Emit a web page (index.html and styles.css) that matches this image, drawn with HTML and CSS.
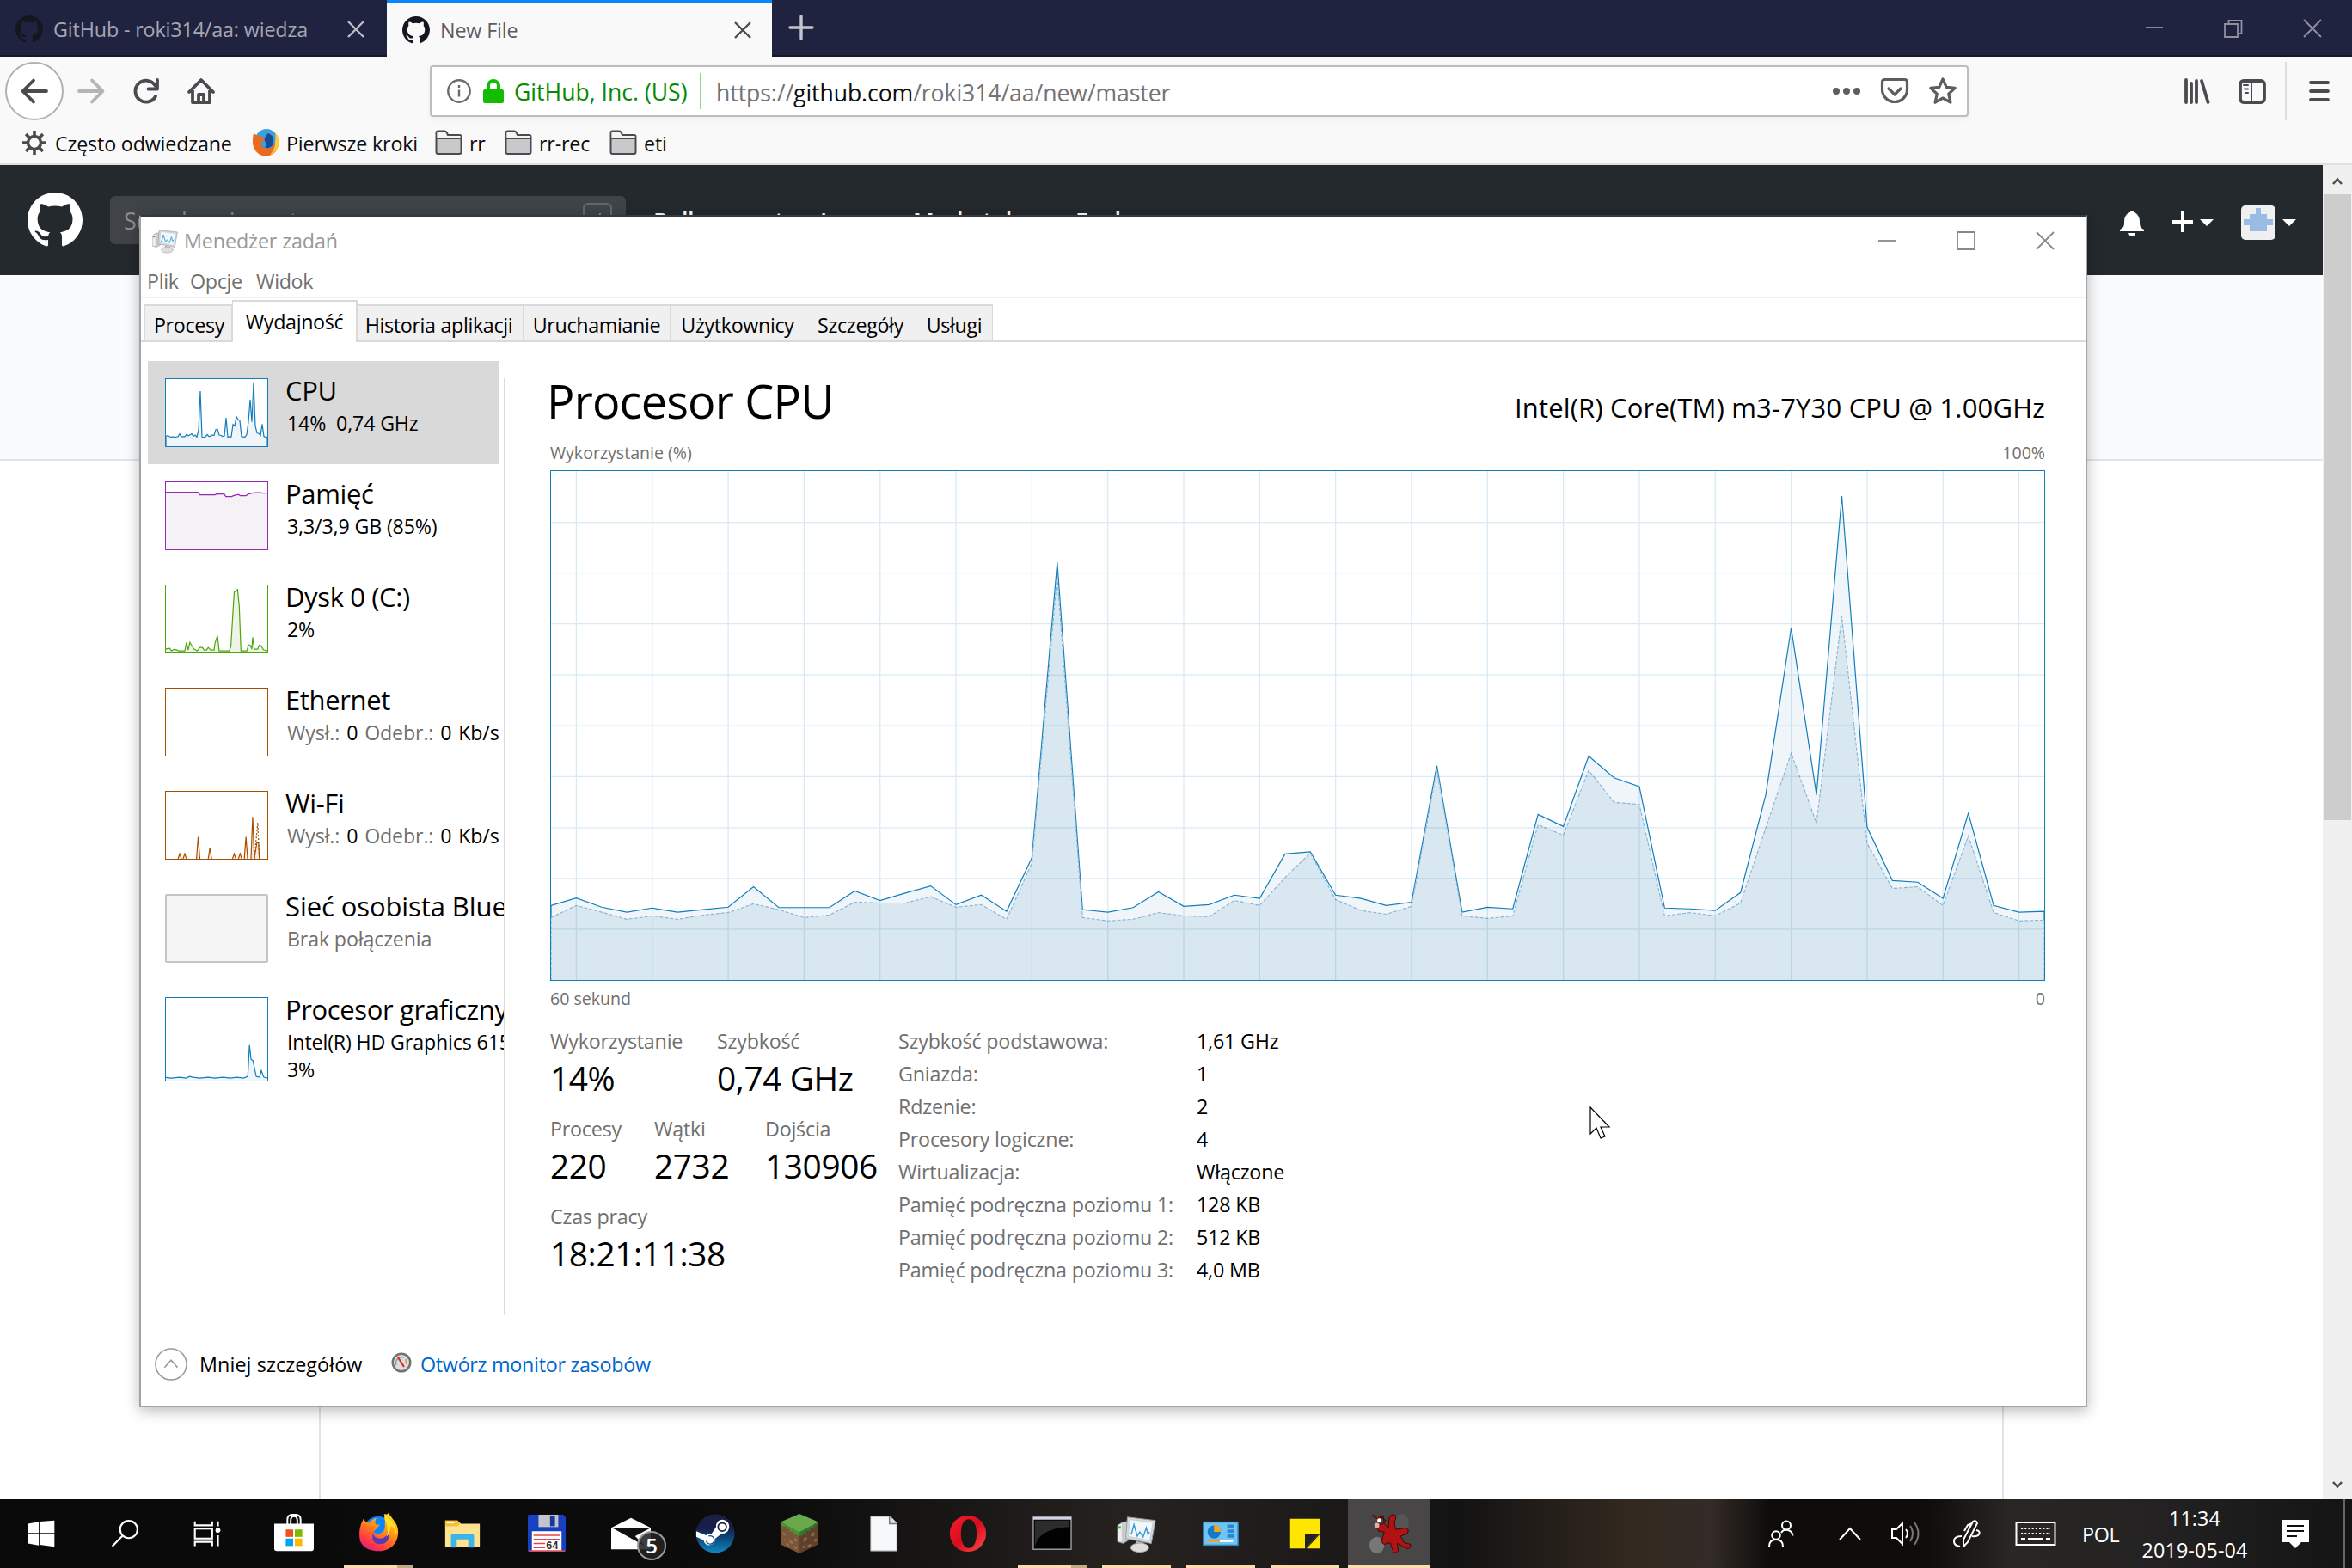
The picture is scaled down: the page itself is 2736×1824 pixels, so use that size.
FILE: index.html
```html
<!DOCTYPE html>
<html lang="pl">
<head>
<meta charset="utf-8">
<title>New File</title>
<link rel="stylesheet" href="styles.css">
</head>
<body>
<svg class="defs" aria-hidden="true">
  <symbol id="octocat" viewBox="0 0 16 16"><path fill="currentColor" d="M8 0C3.58 0 0 3.58 0 8c0 3.54 2.29 6.53 5.47 7.59.4.07.55-.17.55-.38 0-.19-.01-.82-.01-1.49-2.01.37-2.53-.49-2.69-.94-.09-.23-.48-.94-.82-1.13-.28-.15-.68-.52-.01-.53.63-.01 1.08.58 1.23.82.72 1.21 1.87.87 2.33.66.07-.52.28-.87.51-1.07-1.78-.2-3.64-.89-3.64-3.95 0-.87.31-1.59.82-2.15-.08-.2-.36-1.02.08-2.12 0 0 .67-.21 2.2.82.64-.18 1.32-.27 2-.27.68 0 1.36.09 2 .27 1.53-1.04 2.2-.82 2.2-.82.44 1.1.16 1.92.08 2.12.51.56.82 1.27.82 2.15 0 3.07-1.87 3.75-3.65 3.95.29.25.54.73.54 1.48 0 1.07-.01 1.93-.01 2.2 0 .21.15.46.55.38A8.013 8.013 0 0 0 16 8c0-4.42-3.58-8-8-8z"/></symbol>
  <symbol id="folder" viewBox="0 0 32 32"><path d="M1.500 27V4.500q0-2 2-2h8q1.500 0 2.500 2l1 2.500h13.500q2 0 2 2V27q0 2-2 2h-25q-2 0-2-2z" fill="#c9c9cb" stroke="#4a4a4f" stroke-width="2"/><path d="M2.500 8V4.500q0-1 1-1h8l2.500 4.500h15.500v2h-27z" fill="#f4f4f4"/><path d="M1.500 11h29" stroke="#4a4a4f" stroke-width="2"/></symbol>
  <symbol id="monitor" viewBox="0 0 48 48"><path d="M1 14l6-4 9-1v22l-8 5-7-2z" fill="#c9cbcc" stroke="#888" stroke-width=".8"/><path d="M1 14l5-2v22l-5-1z" fill="#eee"/><rect x="2" y="15" width="3" height="3" fill="#3fae2a"/><path d="M13 4l34 4-5 28-31-6z" fill="#d5d8da" stroke="#9a9c9d" stroke-width="1"/><path d="M16 7l28 3.500-4 22-26-5z" fill="#f1f8fd" stroke="#b8c4cc" stroke-width=".7"/><path d="M16 25l2-1 3-11 4 14 3-5 4 6 4-11 2 8 2-3" fill="none" stroke="#3b9bd4" stroke-width="1.500"/><path d="M24 33l9 2-1 5h-8z" fill="#b5b5b5"/><ellipse cx="28" cy="41" rx="11" ry="5.500" fill="#dedede" stroke="#a5a5a5"/></symbol>
</svg>

<header class="tabbar">
  <div class="tab">
    <svg class="tab-icon"><use href="#octocat"/></svg><span class="tab-title">GitHub - roki314/aa: wiedza</span>
    <svg class="tab-close" viewBox="0 0 20 20"><path d="M1 1l18 18M19 1L1 19"/></svg>
  </div>
  <div class="tab tab-active">
    <svg class="tab-icon"><use href="#octocat"/></svg><span class="tab-title">New File</span>
    <svg class="tab-close" viewBox="0 0 20 20"><path d="M1 1l18 18M19 1L1 19"/></svg>
  </div>
  <svg class="tab-new" viewBox="0 0 28 28"><path d="M14 1v26M1 14h26"/></svg>
  <div class="winctl winctl-dark">
    <svg viewBox="0 0 24 24"><path d="M2 11h20"/></svg>
    <svg viewBox="0 0 24 24"><path d="M2 7h15v15H2zM6.500 7V3h15v15H17"/></svg>
    <svg viewBox="0 0 24 24"><path d="M2 2l20 20M22 2L2 22"/></svg>
  </div>
</header>

<nav class="navbar">
  <div class="nav-buttons">
    <span class="back"><svg viewBox="0 0 32 32"><path d="M30 16H3M15 3.500L2.500 16 15 28.500"/></svg></span>
    <svg class="nav-ico dim" viewBox="0 0 32 32"><path d="M2 16h27M17 3.500L29.500 16 17 28.500"/></svg>
    <svg class="nav-ico" viewBox="0 0 32 32"><path d="M26.500 9.500A12.500 12.500 0 1 0 27 22M29 3v10.500H18.500"/></svg>
    <svg class="nav-ico" viewBox="0 0 32 32"><path d="M2 17L16 3l14 14M6 15v14h20V15M13 29v-9h6v9"/></svg>
  </div>
  <div class="urlbar">
    <svg class="u-info" viewBox="0 0 28 28"><circle cx="14" cy="14" r="12.700"/><path d="M14 12.500v8M14 7v3"/></svg>
    <svg class="u-lock" viewBox="0 0 24 28"><path d="M6 13V8a6 6 0 0 1 12 0v5" fill="none" stroke="#12bc00" stroke-width="4"/><rect y="12" width="24" height="16" rx="2" fill="#12bc00"/></svg>
    <span class="u-owner">GitHub, Inc. (US)</span>
    <span class="u-url">https://<b>github.com</b>/roki314/aa/new/master</span>
    <div class="u-actions">
      <svg viewBox="0 0 32 32"><g fill="#5e5e60" stroke="none"><circle cx="4" cy="16" r="4"/><circle cx="16" cy="16" r="4"/><circle cx="28" cy="16" r="4"/></g></svg>
      <svg viewBox="0 0 32 32"><path d="M1.500 5.500q0-3 3-3h23q3 0 3 3V14a14.500 14.500 0 0 1-29 0zM9 13l7 7 7-7"/></svg>
      <svg viewBox="0 0 32 32"><path d="M16 2l4.200 9.300 10 1.100-7.500 6.800 2.200 10L16 24l-8.900 5.200 2.200-10-7.500-6.800 10-1.100z"/></svg>
    </div>
  </div>
  <div class="nav-right">
    <svg viewBox="0 0 32 32"><path d="M3 3v26M9 7v22M15 4v25M21 4l7.500 25"/></svg>
    <svg viewBox="0 0 32 32"><rect x="2" y="4" width="28" height="25" rx="4"/><path d="M15 4v25" stroke-width="2"/><path d="M6 9h5M7 13.500h4M8 18h3" stroke-width="2"/></svg>
    <span class="nav-sep"></span>
    <svg class="burger" viewBox="0 0 32 32"><path d="M6 6h20M6 16h20M6 26h20"/></svg>
  </div>
</nav>

<div class="bookmarks">
  <svg viewBox="0 0 28 28" class="gear"><circle cx="14" cy="14" r="7.500" fill="none" stroke="#4a4a4f" stroke-width="3.500"/><path d="M14 0v6M14 22v6M0 14h6M22 14h6M4.100 4.100l4.200 4.200M19.700 19.700l4.200 4.200M23.900 4.100l-4.200 4.200M8.300 19.700l-4.200 4.200" stroke="#4a4a4f" stroke-width="3.600"/></svg><span class="bm bm1">Często odwiedzane</span>
  <svg viewBox="0 0 32 32"><circle cx="17" cy="13" r="13" fill="#3ba0e0"/><path d="M19 5q9 4 5 14-4 5-9 2 4-2 1-5-4-5 3-11z" fill="#1a4a94"/><path d="M2 5q-3 13 2 20 5 7 13 6.500 12-1 14-14 1-7-3-11 1 9-4 14-6 5-12 0-2-2-1-5 3-1 4-4-2-2-5-3-5-1-8-3.500z" fill="#ec6a1a"/><path d="M27 4q6 5 4 15-3 9-10 11 6-7 6-13 1-7 0-13z" fill="#ffc93a"/></svg><span class="bm bm2">Pierwsze kroki</span>
  <svg><use href="#folder"/></svg><span class="bm bm3">rr</span>
  <svg><use href="#folder"/></svg><span class="bm bm4">rr-rec</span>
  <svg><use href="#folder"/></svg><span class="bm">eti</span>
</div>

<main class="page">
  <div class="page-body">
    <div class="gh-header">
      <svg class="gh-mark"><use href="#octocat"/></svg>
      <div class="gh-search"><span>Search or jump to…</span><span class="gh-key">/</span></div>
      <span class="gh-link l1">Pull requests</span><span class="gh-link l2">Issues</span><span class="gh-link l3">Marketplace</span><span class="gh-link">Explore</span>
      <div class="gh-user">
        <svg class="bell" viewBox="0 0 28 32"><path fill="#fff" d="M14 1c1.500 0 2 1 2 2 5 1.500 7 6 7 11 0 6 1 7 5 9v2H0v-2c4-2 5-3 5-9 0-5 2-9.500 7-11 0-1 .5-2 2-2zM10 27h8q-1 4-4 4t-4-4z"/></svg>
        <svg class="plus" viewBox="0 0 24 24"><path d="M12 0v24M0 12h24" stroke="#fff" stroke-width="4"/></svg>
        <i class="caret c1"></i>
        <svg class="avatar" viewBox="0 0 40 40"><rect width="40" height="40" rx="5" fill="#f0f0f0"/><path fill="#9abbe3" d="M17 3h6v7h7v6h7v7h-7v7H10v-7H3v-7h7v-6h7z"/></svg>
        <i class="caret"></i>
      </div>
    </div>
    <div class="gh-sub"></div>
    <div class="gh-editor"></div>
  </div>
  <div class="scrollbar">
    <svg viewBox="0 0 12 10"><path d="M1 8l5-5.500L11 8"/></svg>
    <span class="thumb"></span>
    <svg class="down" viewBox="0 0 12 10"><path d="M1 2l5 5.500L11 2"/></svg>
  </div>
</main>

<section class="tm">
  <div class="tm-title">
    <svg class="tm-icon"><use href="#monitor"/></svg><span>Menedżer zadań</span>
    <div class="winctl">
      <svg viewBox="0 0 24 24"><path d="M2 12h20"/></svg>
      <svg viewBox="0 0 24 24"><path d="M2 2h20v20H2z"/></svg>
      <svg viewBox="0 0 24 24"><path d="M2 2l20 20M22 2L2 22"/></svg>
    </div>
  </div>
  <div class="tm-menu"><span>Plik</span><span>Opcje</span><span>Widok</span></div>
  <div class="tm-tabs"><span>Procesy</span><span class="on">Wydajność</span><span>Historia aplikacji</span><span>Uruchamianie</span><span>Użytkownicy</span><span>Szczegóły</span><span>Usługi</span></div>
  <div class="tm-main">
    <aside class="side">
      <div class="res sel">
        <svg class="graph blue" viewBox="0 263 59 1223" preserveAspectRatio="none"><path d="M0 1307L1 1289 2 1311 3 1323 4 1313 5 1323 6 1317 7 1311 8 1262 9 1312 10 1312 11 1312 12 1272 13 1295 14 1277 15 1260 16 1305 17 1282 18 1321 19 1192 20 482 21 1317 22 1323 23 1312 24 1274 25 1309 26 1305 27 1282 28 1290 29 1183 30 1178 31 1282 32 1290 33 1307 34 1299 35 971 36 1323 37 1311 38 1315 39 1088 40 1117 41 948 42 1000 43 1021 44 1313 45 1315 46 1319 47 1276 48 1040 49 640 50 1041 51 323 52 1119 53 1247 54 1251 55 1290 56 1085 57 1307 58 1323 59 1321V1500H0z"/></svg>
        <div><h3>CPU</h3><p>14%&nbsp; 0,74 GHz</p></div>
      </div>
      <div class="res">
        <svg class="graph purple" viewBox="0 0 120 80"><path d="M-2 12H38L40 15H58L60 14H69L71 17H78L80 16 86 14.500 88 16H95L98 14 105 12.500H113L115 13H122V82H-2z"/></svg>
        <div><h3>Pamięć</h3><p>3,3/3,9 GB (85%)</p></div>
      </div>
      <div class="res">
        <svg class="graph green" viewBox="0 0 120 80"><path d="M-2 76L4 75 6 78 10 76 15 78H22L24 68 26 77 28 68 33 76 37 78 40 74H43L45 77H48L50 74 53 77H57L58 69 61 60 63 78H75L77 73 79 40 81 8 85 5 87 25 89 78H96L98 71H100L102 76 103 62 105 76H109L111 71 113 72 116 77 122 78V82H-2z"/></svg>
        <div><h3>Dysk 0 (C:)</h3><p>2%</p></div>
      </div>
      <div class="res">
        <svg class="graph brown" viewBox="0 0 120 80"></svg>
        <div><h3>Ethernet</h3><p class="net"><i>Wysł.:</i> 0 <i>Odebr.:</i> 0 Kb/s</p></div>
      </div>
      <div class="res">
        <svg class="graph brown" viewBox="0 0 120 80"><path d="M14 80l2-6 2 6M20 80l2-6 2 6M36 80l2-26 2 26M50 80l2-13 2 13M79 80l2-6 2 6M86 80l2-6 2 6M93 80l2-26 2 26M101 80l2-50 2 50 3-19h2l1 19"/><path class="dots" d="M105 80l4-43 2 43"/></svg>
        <div><h3>Wi-Fi</h3><p class="net"><i>Wysł.:</i> 0 <i>Odebr.:</i> 0 Kb/s</p></div>
      </div>
      <div class="res">
        <svg class="graph grey" viewBox="0 0 120 80"></svg>
        <div><h3 class="wide">Sieć osobista Bluetooth</h3><p><i>Brak połączenia</i></p></div>
      </div>
      <div class="res gpu">
        <svg class="graph blue tall" viewBox="0 0 120 98"><path d="M-2 94L6 95 16 94 24 95 28 93 32 94 40 95 50 94 58 95 68 94 76 95 84 94 92 95 97 93 99 56 101 73 103 74 107 93 111 94 113 86 116 94 122 95V100H-2z"/></svg>
        <div><h3>Procesor graficzny 0</h3><p class="wide">Intel(R) HD Graphics 615</p><p>3%</p></div>
      </div>
    </aside>
    <div class="detail">
      <div class="d-head"><h1>Procesor CPU</h1><span>Intel(R) Core(TM) m3-7Y30 CPU @ 1.00GHz</span></div>
      <div class="d-axis"><span>Wykorzystanie (%)</span><span>100%</span></div>
      <svg class="chart" viewBox="0 263 59 1223" preserveAspectRatio="none">
        <path class="total" d="M0 1307L1 1289 2 1311 3 1323 4 1313 5 1323 6 1317 7 1311 8 1262 9 1312 10 1312 11 1312 12 1272 13 1295 14 1277 15 1260 16 1305 17 1282 18 1321 19 1192 20 482 21 1317 22 1323 23 1312 24 1274 25 1309 26 1305 27 1282 28 1290 29 1183 30 1178 31 1282 32 1290 33 1307 34 1299 35 971 36 1323 37 1311 38 1315 39 1088 40 1117 41 948 42 1000 43 1021 44 1313 45 1315 46 1319 47 1276 48 1040 49 640 50 1041 51 323 52 1119 53 1247 54 1251 55 1290 56 1085 57 1307 58 1323 59 1321V1500H0z"/>
        <path class="kernel" d="M0 1336L1 1307 2 1323 3 1340 4 1332 5 1340 6 1330 7 1324 8 1303 9 1317 10 1336 11 1330 12 1299 13 1301 14 1301 15 1286 16 1311 17 1305 18 1340 19 1205 20 515 21 1336 22 1344 23 1340 24 1324 25 1332 26 1334 27 1295 28 1307 29 1240 30 1181 31 1293 32 1319 33 1328 34 1309 35 980 36 1332 37 1338 38 1332 39 1113 40 1138 41 982 42 1059 43 1064 44 1332 45 1324 46 1332 47 1301 48 1120 49 941 50 1109 51 612 52 1158 53 1266 54 1262 55 1307 56 1140 57 1324 58 1344 59 1342V1500H0z"/>
        <path class="grid" d="M1 263V1486M4 263V1486M7 263V1486M10 263V1486M13 263V1486M16 263V1486M19 263V1486M22 263V1486M25 263V1486M28 263V1486M31 263V1486M34 263V1486M37 263V1486M40 263V1486M43 263V1486M46 263V1486M49 263V1486M52 263V1486M55 263V1486M58 263V1486M0 386H59M0 508H59M0 630H59M0 753H59M0 875H59M0 997H59M0 1120H59M0 1242H59M0 1364H59"/>
      </svg>
      <div class="d-axis d-axis2"><span>60 sekund</span><span>0</span></div>
      <div class="stats">
        <div class="live">
          <div class="live-row r2"><div><label>Wykorzystanie</label><b>14%</b></div><div><label>Szybkość</label><b>0,74 GHz</b></div></div>
          <div class="live-row r3"><div><label>Procesy</label><b>220</b></div><div><label>Wątki</label><b>2732</b></div><div><label>Dojścia</label><b>130906</b></div></div>
          <div class="live-row"><div><label>Czas pracy</label><b>18:21:11:38</b></div></div>
        </div>
        <dl class="facts">
          <dt>Szybkość podstawowa:</dt><dd>1,61 GHz</dd>
          <dt>Gniazda:</dt><dd>1</dd>
          <dt>Rdzenie:</dt><dd>2</dd>
          <dt>Procesory logiczne:</dt><dd>4</dd>
          <dt>Wirtualizacja:</dt><dd>Włączone</dd>
          <dt>Pamięć podręczna poziomu 1:</dt><dd>128 KB</dd>
          <dt>Pamięć podręczna poziomu 2:</dt><dd>512 KB</dd>
          <dt>Pamięć podręczna poziomu 3:</dt><dd>4,0 MB</dd>
        </dl>
      </div>
    </div>
  </div>
  <div class="tm-foot">
    <svg class="less" viewBox="0 0 40 40"><circle cx="20" cy="20" r="19"/><path d="M12 24l8-9 8 9"/></svg>
    <span class="f1">Mniej szczegółów</span>
    <svg class="gauge" viewBox="0 0 24 24"><circle cx="12" cy="12" r="11.500" fill="#6f7373"/><circle cx="12" cy="12" r="9" fill="#dedede"/><path d="M6 15a7 7 0 0 1 9-9" fill="none" stroke="#999" stroke-width="1.500"/><path d="M8 6l7 11" stroke="#d22" stroke-width="2"/><path d="M17 8l1 6" stroke="#e59a4c" stroke-width="2"/></svg>
    <a>Otwórz monitor zasobów</a>
  </div>
</section>

<svg class="cursor" viewBox="0 0 24 38"><path d="M1 1v31l7-7 5 12 5-2-5-11h10z" fill="#fff" stroke="#000" stroke-width="1.200"/></svg>

<footer class="taskbar">
  <div class="tb-apps">
    <span class="app first"><svg viewBox="0 0 48 48"><path fill="#fff" d="M8 12l13-2.300V23.200H8zM22.300 9.500L40 8v15.200H22.300zM8 24.500h13v13.800L8 36zM22.300 24.500H40V40l-17.700-2.500z"/></svg></span>
    <span class="app"><svg viewBox="0 0 48 48"><g fill="none" stroke="#fff" stroke-width="2.200"><circle cx="29" cy="19" r="10.500"/><path d="M21.500 26.500L9 39.500"/></g></svg></span>
    <span class="app"><svg viewBox="0 0 48 48"><g fill="none" stroke="#fff" stroke-width="2.200"><path d="M7 9v5h21V9M7 39v-5h21v5"/><rect x="7" y="18" width="21" height="12"/><path d="M35 9v6M35 26v13"/></g><circle cx="35" cy="20" r="3" fill="#fff"/></svg></span>
    <span class="app"><svg viewBox="0 0 48 48"><path d="M16 13V7q0-6 6-6h4q6 0 6 6v6M20 13V8q0-5 4-5t4 5v5" fill="none" stroke="#fff" stroke-width="2"/><path d="M0 12h48v30q0 3-3 3H3q-3 0-3-3z" fill="#fff"/><path fill="#f25022" d="M14 19h9v9h-9z"/><path fill="#7fba00" d="M25 19h9v9h-9z"/><path fill="#00a4ef" d="M14 30h9v9h-9z"/><path fill="#ffb900" d="M25 30h9v9h-9z"/></svg></span>
    <span class="app run split"><svg viewBox="0 0 48 48"><defs><linearGradient id="fx" x1=".8" y1="0" x2=".2" y2="1"><stop offset="0" stop-color="#ffe226"/><stop offset=".45" stop-color="#ff8a16"/><stop offset=".8" stop-color="#ff3647"/><stop offset="1" stop-color="#d6208f"/></linearGradient></defs><circle cx="24" cy="21" r="18" fill="#0a84ff"/><path d="M6 6q2 4 7 5 4-5 9-6-3 4-1 8h5l-4 5-4 4q5 4 10 1 5-3 4-10 1-7-1-13 4 2 5-1 4 5 7 9 6 7 5 17-2 17-20 20Q8 46 2 33-1 18 6 6z" fill="url(#fx)"/><path d="M17 22q1 8 10 8 8-1 8-9 5 10-4 15-10 3-14-5z" fill="#5b36b5"/><path d="M33 0q2 6 7 9 7 8 6 16-2-8-7-11 0 9-5 14 3-12-1-19-3-4 0-9z" fill="#ffe226"/></svg></span>
    <span class="app"><svg viewBox="0 0 48 48"><path d="M3 8h15l4 4h23v28H3z" fill="#ffe28f"/><path d="M3 8h15l3 4-3 3H3z" fill="#f5c236"/><path d="M5 9.500h9v2H5z" fill="#fff"/><path d="M10 41V27q0-3 3-3h22q3 0 3 3v14h-7V31H17v10z" fill="#3cb6ea"/></svg></span>
    <span class="app"><svg viewBox="0 0 48 48"><path d="M1 3q0-2 2-2h41l3 3v40q0 2-2 2H3q-2 0-2-2z" fill="#1741c0"/><path d="M14 1h24v15H14z" fill="#c3c5cb"/><path d="M28 2h6v13h-6z" fill="#173a9c"/><path d="M6 21h36v24H6z" fill="#fff"/><path d="M2 45h44" stroke="#d24a5a" stroke-width="2"/><path d="M8 26h32M8 31h32M8 36h14M8 41h14" stroke="#e4444d" stroke-width="1.500"/><text x="23" y="43" class="f64">64</text></svg></span>
    <span class="app"><svg viewBox="0 0 48 48"><path d="M0 17L24 5l24 12v26H0z" fill="#fff"/><path d="M2 17.500h45L29 27l12 12z" fill="#111"/></svg><em class="badge">5</em></span>
    <span class="app"><svg viewBox="0 0 48 48"><defs><linearGradient id="st" x1="0" y1="0" x2="0" y2="1"><stop offset="0" stop-color="#1b2144"/><stop offset=".35" stop-color="#181c48"/><stop offset=".6" stop-color="#0b4577"/><stop offset="1" stop-color="#1387c0"/></linearGradient></defs><circle cx="24" cy="24" r="23.500" fill="url(#st)"/><path d="M1 21l12 5q3-2 6-1l6-9q0-9 8-9 8 1 8 9-1 8-9 8l-8 6q0 7-7 8-6 0-7-6L1 28z" fill="#fff"/><circle cx="32.500" cy="16" r="5" fill="#fff" stroke="#181c48" stroke-width="1.800"/><path d="M13 33a5 5 0 1 0 3-6" fill="none" stroke="#0b4577" stroke-width="1.300"/></svg></span>
    <span class="app"><svg viewBox="0 0 48 48"><path fill="#6aa84c" d="M24 0l23 10-23 13L1 10z"/><path fill="#7a5538" d="M1 11l23 12v25L1 37z"/><path fill="#5f4029" d="M47 11L24 23v25l23-11z"/><path fill="#4a9435" d="M1 10l23 12v5l-3-1v-2l-4 1v-4l-5 1v-4l-4 1v-3l-7-2z"/><path fill="#2f7a2b" d="M47 10L24 22v5l4-1v-3l4 2v-5l5 1v-4l5 1v-4l5-1z"/><path fill="#9a7353" d="M4 22l3 2v3l-3-2zM12 32l4 2v3l-4-2zM18 29l3 2v3l-3-1zM8 35l3 1v3l-3-1zM5 30l2 1v2l-2-1zM18 39l3 1v3l-3-1z"/><path fill="#8a6a50" d="M29 30l4-2v4l-4 2zM38 24l4-2v4l-4 2zM34 38l4-2v3l-4 2zM28 39l3-1v3l-3 1zM42 31l3-1v3l-3 1z"/></svg></span>
    <span class="app"><svg viewBox="0 0 48 48"><path d="M8 3h24l8 8v34H8z" fill="#f7f8fa" stroke="#888" stroke-width="1"/><path d="M31 3v9h9" fill="#e2e2e4" stroke="#777" stroke-width="1.500"/></svg></span>
    <span class="app"><svg viewBox="0 0 48 48"><defs><linearGradient id="op" x1="0" y1="0" x2="1" y2="1"><stop offset="0" stop-color="#ff1b2d"/><stop offset=".5" stop-color="#d50d1f"/><stop offset="1" stop-color="#ff4b4b"/></linearGradient></defs><path fill-rule="evenodd" fill="url(#op)" d="M24 2a22 22 0 1 1 0 44a22 22 0 0 1 0-44zM25 6.500c-6 0-9.500 7-9.500 17.500S19 41.500 25 41.500 34.500 34 34.500 24 31 6.500 25 6.500z"/></svg></span>
    <span class="app run split"><svg viewBox="0 0 48 48"><rect x="1" y="4" width="46" height="39" fill="#020202" stroke="#9c9ca8" stroke-width="1.500"/><path d="M1 4h46v3H1z" fill="#d4d4e2"/><path d="M3 41Q6 18 45 16V8H3z" fill="#2c2c2c"/></svg></span>
    <span class="app run"><svg><use href="#monitor"/></svg></span>
    <span class="app run"><svg viewBox="0 0 48 48"><rect x="3" y="10" width="42" height="28" fill="#6fc4f4" stroke="#2a86c4" stroke-width="1.500"/><circle cx="16" cy="22" r="8" fill="#1878c8"/><path d="M16 22V13a9 9 0 0 1 8 9z" fill="#f8a51b"/><path d="M32 13h8v4h-8zM32 19h8v4h-8zM32 25h8v4h-8z" fill="#2a86d0"/><path d="M8 33h31" stroke="#fff" stroke-width="2.500"/><path d="M8 33h15" stroke="#f29a18" stroke-width="2.500"/></svg></span>
    <span class="app run"><svg viewBox="0 0 48 48"><path d="M6 6h36v18L24 42H6z" fill="#ffe600"/><path d="M24 24h18L24 42z" fill="#222"/><path d="M42 25v17H26z" fill="#ffe600"/></svg></span>
    <span class="app run active"><svg viewBox="0 0 48 48"><ellipse cx="39" cy="11" rx="9" ry="11" fill="#555"/><ellipse cx="9" cy="38" rx="9" ry="10" fill="#777"/><path d="M3 2l7 4 7-3 1 9 5 5 1-12q2-5 6-4 4 3 0 9l2 9 12-2q5 2 2 7l-8 3 4 8 8 2q1 6-5 5l-7-4-4-2 1 9q-3 4-6 1l-4-11-7 2q-5-2-2-8l2-7-7-1-2-6 7-3 4-4-8-5z" fill="#b11212" stroke="#3a0505" stroke-width="1"/><circle cx="12" cy="8" r="2.500" fill="#fff"/><circle cx="9" cy="14" r="3" fill="#f0a9a0"/></svg></span>
  </div>
  <div class="tray">
    <svg class="t-people" viewBox="0 0 32 32"><circle cx="22" cy="6.500" r="5"/><path d="M16 15q2-3.500 6-3.500 7 1 7.500 7"/><circle cx="10" cy="18" r="4.800"/><path d="M2 31q0-8 8-8t8 8"/></svg>
    <svg class="t-up" viewBox="0 0 32 32"><path d="M4 23l12-13 12 13"/></svg>
    <svg class="t-vol" viewBox="0 0 32 32"><path d="M1 11h5l7-7v24l-7-7H1z"/><path d="M17 11q4 5 0 10"/><path d="M22 7q6 9 0 18M27 3q9 13 0 26" stroke="#777"/></svg>
    <svg class="t-pen" viewBox="0 0 32 32"><path d="M23 2q4-2 5 2L17 26l-5 5v-8zM22 4l-5 2-4 7M10 19q-9 0-9 6 0 5 7 6M27 12q5 1 3 5-2 3-8 2"/></svg>
    <svg class="t-kb" viewBox="0 0 48 32"><rect x="1.500" y="3" width="45" height="26"/><path d="M7 10h34M7 16h34" stroke-dasharray="2.200 2"/><path d="M7 22h5M15 22h18M36 22h5"/></svg>
    <span class="lang">POL</span>
    <div class="clock"><span>11:34</span><span>2019-05-04</span></div>
    <svg class="t-note" viewBox="0 0 32 32"><path d="M0 0h32v26h-9l-7 7-7-7H0z" fill="#fff" stroke="none"/><path d="M6 7h20M6 13h20M6 19h12" stroke="#111"/></svg>
    <span class="peek"></span>
  </div>
</footer>
</body>
</html>
```
FILE: styles.css
```css
* { box-sizing: border-box; margin: 0; padding: 0; letter-spacing: -0.015em; }
body {
  position: relative; width: 2736px; height: 1824px; overflow: hidden;
  display: flex; flex-direction: column;
  font-family: "Open Sans", "Noto Sans", sans-serif; font-size: 23.300px; color: #000; background: #fff;
}
svg { display: block; flex: none; fill: none; overflow: visible; }
span, p, h1, h3, label, dt, dd { white-space: nowrap; }
.defs { position: absolute; width: 0; height: 0; }

/* browser tabs */
.tabbar { height: 66px; flex: none; display: flex; background: #202340; box-shadow: inset 0 -2px #15172c; }
.tab { width: 450px; display: flex; align-items: center; padding: 2px 26px 0 18px; color: #a5a6b2; }
.tab-active { width: 448px; background: #f9f9fa; border-top: 4px solid #0a84ff; padding: 0 24px 0 18px; color: #5c5c61; }
.tab-icon { width: 32px; height: 32px; color: #15161f; }
.tab-title { flex: 1; margin-left: 12px; letter-spacing: -0.006em; }
.tab-close { width: 20px; height: 20px; stroke: #bcbdc8; stroke-width: 2.400; }
.tab-active .tab-close { stroke: #4a4a4f; }
.tab-new { width: 28px; height: 28px; margin: 18px 0 0 20px; stroke: #c3c4cf; stroke-width: 3.400; stroke-linecap: round; }
.winctl { display: flex; align-items: center; gap: 68px; margin-left: auto; margin-right: 34px; height: 100%; }
.winctl svg { width: 24px; height: 24px; stroke: #888; stroke-width: 1.800; }
.winctl-dark svg { stroke: #8f91a0; }

/* browser toolbar */
.navbar { height: 78px; flex: none; display: flex; background: #f9f9fa; padding-top: 6px; }
.nav-buttons { width: 500px; height: 68px; padding-left: 6px; display: flex; align-items: center; }
.back { width: 68px; height: 68px; border: 2px solid #b1b1b1; border-radius: 50%; background: #fff; display: grid; place-items: center; }
.back svg, .nav-ico { width: 32px; height: 32px; stroke: #4a4a4f; stroke-width: 3.800; stroke-linecap: round; stroke-linejoin: round; }
.nav-ico { margin-left: 32px; }
.back + .nav-ico { margin-left: 16px; }
.dim { stroke: #b5b5b7; }
.urlbar { width: 1790px; height: 60px; margin-top: 4px; border: 2px solid #bdbdbe; border-radius: 4px; background: #fff; box-shadow: 0 2px 6px rgba(0,0,0,.06); display: flex; align-items: center; font-size: 26.600px; }
.u-info { width: 28px; height: 28px; margin-left: 18px; stroke: #6b6b6e; stroke-width: 2.400; }
.u-lock { width: 24px; height: 28px; margin-left: 14px; }
.u-owner { width: 218px; margin-left: 12px; color: #058b00; height: 42px; line-height: 45px; border-right: 2px solid #8ad883; letter-spacing: 0; }
.u-url, .u-url b { letter-spacing: -0.003em; }
.u-url { margin-left: 17px; padding-top: 3px; color: #737376; }
.u-url b { font-weight: 400; color: #0c0c0d; }
.u-actions { display: flex; gap: 24px; margin-left: auto; margin-right: 12px; }
.u-actions svg { width: 32px; height: 32px; stroke: #5e5e60; stroke-width: 3.200; stroke-linejoin: round; stroke-linecap: round; }
.nav-right { height: 68px; flex: 1; display: flex; align-items: center; padding-left: 250px; }
.nav-right svg { width: 32px; height: 32px; stroke: #4a4a4f; stroke-width: 3.800; stroke-linecap: round; }
.nav-right svg + svg { margin-left: 32px; }
.nav-sep { width: 2px; height: 68px; background: #dcdcdd; margin-left: 22px; }
.nav-right .burger { margin-left: 22px; }
.bookmarks { height: 48px; flex: none; display: flex; align-items: center; padding: 0 0 2px 24px; background: #f9f9fa; border-bottom: 2px solid #e0e0e1; color: #0c0c0d; }
.bookmarks svg { width: 32px; height: 32px; }
.bookmarks .gear { width: 28px; height: 28px; margin: 0 2px; }
.bm { margin-left: 8px; padding-top: 2px; letter-spacing: -0.008em; }
.bm1 { width: 229px; } .bm2 { width: 173px; } .bm3 { width: 41px; } .bm4 { width: 82px; }

/* page */
.page { flex: 1; display: flex; }
.page-body { width: 2702px; display: flex; flex-direction: column; }
.gh-header { height: 128px; background: #24292e; display: flex; align-items: center; padding-left: 32px; font-size: 27px; }
.gh-mark { width: 64px; height: 64px; color: #fff; }
.gh-search { width: 600px; height: 56px; margin-left: 32px; border-radius: 6px; background: #404448; color: #8b8e90; padding: 0 16px; display: flex; align-items: center; justify-content: space-between; }
.gh-key { width: 34px; height: 40px; border: 2px solid #64686b; border-radius: 6px; text-align: center; line-height: 34px; font-size: 22px; }
.gh-link { color: #fff; font-weight: 600; }
.l1 { margin-left: 32px; width: 194px; } .l2 { width: 108px; } .l3 { width: 189px; }
.gh-user { margin-left: auto; margin-right: 31px; display: flex; align-items: center; }
.bell { width: 28px; height: 32px; margin-top: 8px; }
.plus { width: 24px; height: 24px; margin-left: 33px; margin-top: 4px; }
.caret { border: 8px solid transparent; border-top-color: #fff; border-bottom: 0; margin-left: 8px; margin-top: 6px; }
.avatar { width: 40px; height: 40px; margin-left: 32px; margin-top: 6px; }
.gh-sub { height: 216px; background: #fafbfc; border-bottom: 2px solid #e1e4e8; }
.gh-editor { flex: 1; width: 1960px; margin-left: 371px; border: solid #e1e2ea; border-width: 0 2px; }
.scrollbar { width: 34px; background: #f0f0f0; display: flex; flex-direction: column; align-items: center; }
.scrollbar svg { width: 12px; height: 10px; margin: 14px 0 10px; stroke: #505050; stroke-width: 2.600; }
.thumb { width: 32px; height: 728px; background: #cdcdcd; }
.scrollbar .down { margin-top: auto; margin-bottom: 12px; }

/* task manager window */
.tm { position: absolute; left: 162px; top: 250px; width: 2266px; height: 1387px; border: 2px solid #a3a4a5; border-top-color: #35393d; background: #fff; box-shadow: 0 4px 16px rgba(0,0,0,.28); display: flex; flex-direction: column; }
.tm-title { height: 55px; display: flex; align-items: center; padding-left: 13px; color: #999; }
.tm-title > span { letter-spacing: -0.005em; }
.tm-icon { width: 30px; height: 30px; margin-right: 7px; }
.tm-title .winctl { margin-right: 35px; }
.tm-menu { height: 40px; padding-left: 7px; display: flex; border-bottom: 2px solid #f0f0f0; color: #707070; line-height: 40px; }
.tm-menu span:nth-child(1) { width: 50px; } .tm-menu span:nth-child(2) { width: 77px; }
.tm-tabs { height: 51px; padding-left: 4px; display: flex; align-items: flex-end; box-shadow: inset 0 -2px #dadada; }
.tm-tabs span { height: 44px; line-height: 44px; background: #f0f0f0; border: solid #d9d9d9; border-width: 2px 1px 2px 0; text-align: center; }
.tm-tabs span:nth-child(1) { width: 102px; border-left-width: 1px; padding-left: 2px; }
.tm-tabs .on { width: 146px; height: 49px; line-height: 46px; background: #fff; border-width: 2px 2px 0 1px; }
.tm-tabs span:nth-child(3) { width: 193px; padding-right: 3px; } .tm-tabs span:nth-child(4) { width: 171px; }
.tm-tabs span:nth-child(5) { width: 157px; } .tm-tabs span:nth-child(6) { width: 129px; } .tm-tabs span:nth-child(7) { width: 89px; }
.tm-main { height: 1141px; display: flex; }
.side { width: 422px; padding: 22px 0 0 8px; overflow: hidden; }
.res { width: 408px; height: 120px; padding: 20px 0 0 20px; display: flex; }
.sel { background: #d9d9d9; }
.res > div { margin: -4px 0 0 20px; }
.res h3 { font-weight: 400; font-size: 31px; line-height: 36px; letter-spacing: -0.012em; }
.res h3.wide { letter-spacing: -0.003em; }
.res p { line-height: 32px; font-size: 23.200px; padding-left: 2px; letter-spacing: -0.006em; }
.res p i { letter-spacing: -0.006em; }
.res .net { word-spacing: 2px; }
.res h3 + p { margin-top: 4px; }
.res i { font-style: normal; color: #707070; }
.graph { width: 120px; height: 80px; border: 1px solid; background: #fff; overflow: hidden; }
.tall { height: 98px; }
.graph path { stroke: currentColor; stroke-width: 1.200; vector-effect: non-scaling-stroke; }
.blue { color: #117dbb; } .blue path { fill: #f0f5fa; }
.purple { color: #9528b4; } .purple path { fill: #f4f2f5; }
.green { color: #4da60c; } .green path { fill: #eef5e8; }
.brown { color: #a74f01; } .brown path { fill: #f8ece2; } .brown .dots { stroke-dasharray: 2 2; fill: none; }
.grey { color: #c4c4c4; border-width: 2px; background: #f5f5f5; border-radius: 2px; }
.detail { width: 1793px; margin-top: 42px; height: 1090px; border-left: 2px solid #dcdcdc; padding-left: 52px; display: flex; flex-direction: column; }
.d-head { height: 60px; margin-top: -4px; display: flex; justify-content: space-between; line-height: 60px; }
.d-head h1 { font-weight: 400; font-size: 54px; margin-left: -4px; }
.d-head span { font-size: 31px; line-height: 76px; letter-spacing: 0.006em; }
.d-axis { height: 51px; padding-top: 22px; line-height: 18px; display: flex; justify-content: space-between; font-size: 19.600px; color: #707070; }
.d-axis span { letter-spacing: -0.001em; }
.chart { width: 1739px; height: 594px; flex: none; border: 1px solid #117dbb; overflow: hidden; }
.chart path { vector-effect: non-scaling-stroke; }
.total { fill: #f0f5fa; stroke: #117dbb; stroke-width: 1.200; }
.kernel { fill: #d9e7f0; stroke: #84b4d4; stroke-width: 1.100; stroke-dasharray: 4 2; }
.grid { stroke: #117dbb; stroke-opacity: .16; stroke-width: 1.300; }
.d-axis2 { padding-top: 12px; }
.stats { display: flex; color: #000; }
.live { width: 405px; margin-top: 4px; }
.live-row { display: grid; grid-template-columns: 194px 1fr; height: 102px; }
.r3 { grid-template-columns: 121px 129px 1fr; }
.live label { display: block; line-height: 30px; color: #707070; letter-spacing: -0.01em; }
.live b { display: block; font-weight: 400; font-size: 38.800px; line-height: 56px; letter-spacing: -0.01em; }
.facts { display: grid; grid-template-columns: 347px auto; grid-auto-rows: 38px; line-height: 38px; align-content: start; }
.facts dt, .facts dd { letter-spacing: -0.009em; }
.facts dt { color: #707070; }
.tm-foot { flex: 1; display: flex; align-items: center; padding-left: 16px; }
.less { width: 38px; height: 38px; stroke: #999; stroke-width: 1.700; }
.f1 { margin-left: 14px; width: 207px; letter-spacing: 0.004em; background: linear-gradient(#d9d9d9, #d9d9d9) right 9px/1px 15px no-repeat; }
.gauge { width: 24px; height: 24px; margin: -4px 10px 0 16px; }
.tm-foot a { color: #0066cc; letter-spacing: -0.012em; }

.cursor { position: absolute; left: 1849px; top: 1287px; width: 24px; height: 38px; }

/* taskbar */
.taskbar { height: 80px; flex: none; display: flex; color: #fff; background: linear-gradient(90deg, #090909 0, #0c0c0c 900px, #262220 1320px, #1c1919 1550px, #141313 1700px, #33291f 1900px, #332b27 1990px, #0d0c0a 2060px, #0f0d0b 2240px, #292624 2340px, #242222 2500px, #141414 2736px); }
.tb-apps { display: flex; flex: 1; }
.app { position: relative; width: 98px; height: 80px; display: grid; place-items: center; border: solid transparent; border-width: 0 9px; background-clip: padding-box; }
.app.first { width: 96px; }
.app svg { width: 46px; height: 46px; }
.app:nth-child(4) { margin-right: 0; margin-left: 1px; }
.run { background: linear-gradient(#ffd9ae, #ffd9ae) bottom/100% 4px no-repeat padding-box; }
.split { background: linear-gradient(90deg, #ffd9ae 62px, #c8a884 62px) bottom/100% 4px no-repeat padding-box; }
.active { border-width: 0 1px; background: linear-gradient(#ffd9ae, #ffd9ae) bottom/100% 4px no-repeat padding-box, #484646 padding-box; }
.badge { position: absolute; left: 47px; top: 37px; width: 34px; height: 34px; border: 2px solid #9b9b9b; border-radius: 50%; background: rgba(35,35,35,.88); font-style: normal; font-weight: 600; font-size: 24px; line-height: 29px; text-align: center; }
.f64 { font: bold 13px "Liberation Mono", monospace; fill: #333; }
.tray { width: 680px; display: flex; align-items: center; }
.tray svg { width: 32px; height: 32px; stroke: #fff; stroke-width: 2; }
.t-up { margin-left: 48px; }
.t-vol { margin-left: 32px; }
.t-pen { margin-left: 40px; }
.tray .t-kb { width: 48px; margin-left: 40px; }
.lang { margin-left: 30px; width: 64px; padding-top: 2px; }
.clock { width: 136px; display: flex; flex-direction: column; align-items: center; line-height: 37px; padding-top: 1px; margin-left: -1px; }
.clock span { letter-spacing: 0.006em; }
.tray .t-note { margin-left: 33px; }
.peek { width: 2px; height: 80px; background: #666; margin-left: auto; margin-right: 8px; }
```
